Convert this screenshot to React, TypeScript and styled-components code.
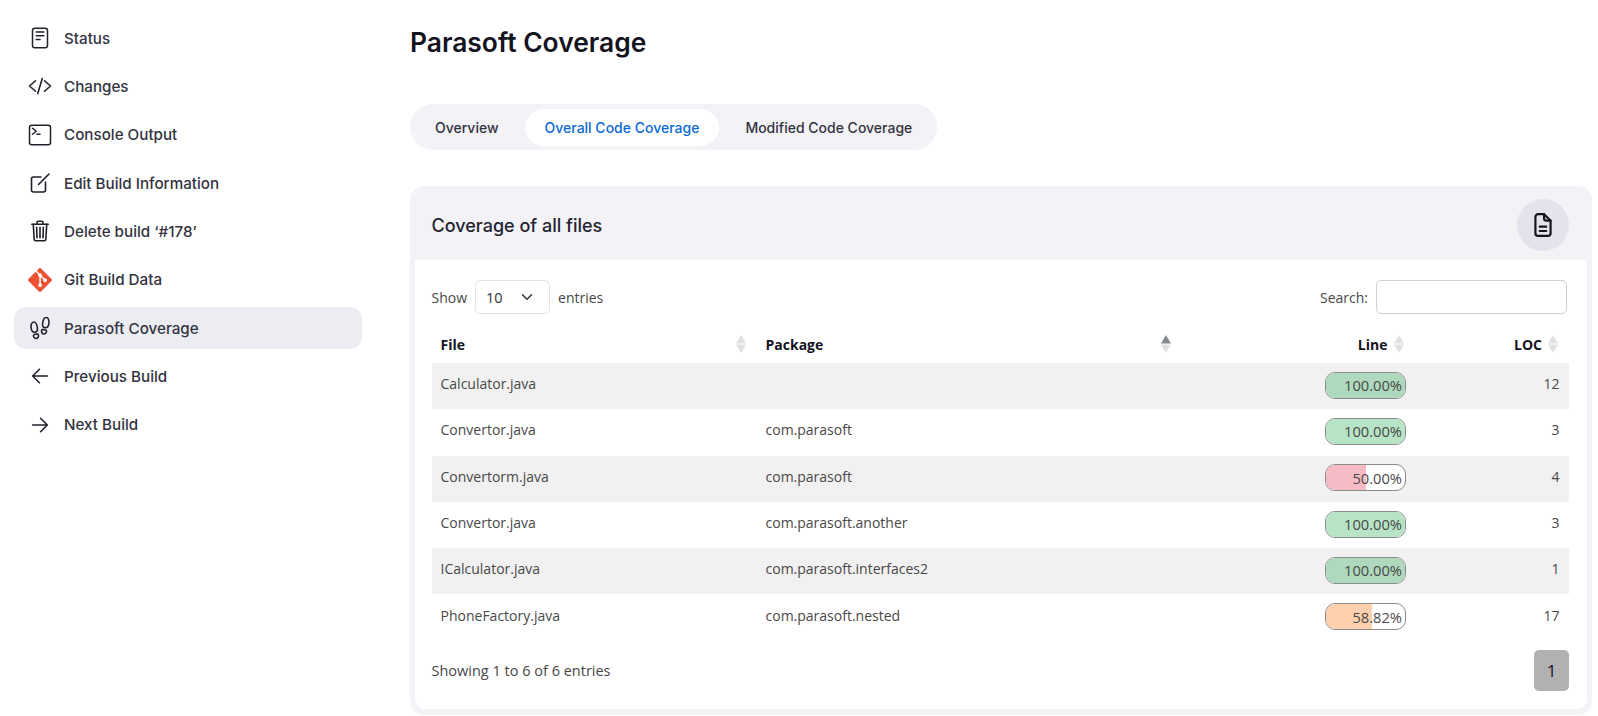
import React from 'react'
import styled, { createGlobalStyle } from 'styled-components'
import {
  IoReaderOutline,
  IoCodeSlashOutline,
  IoTerminalOutline,
  IoTrashOutline,
  IoFootstepsOutline,
  IoArrowBackOutline,
  IoArrowForwardOutline,
  IoChevronDownOutline,
} from 'react-icons/io5'
import { SiGit } from 'react-icons/si'

type Row = {
  file: string
  pkg: string
  pct: number
  loc: number
}

const rows: Row[] = [
  { file: 'Calculator.java', pkg: '', pct: 100, loc: 12 },
  { file: 'Convertor.java', pkg: 'com.parasoft', pct: 100, loc: 3 },
  { file: 'Convertorm.java', pkg: 'com.parasoft', pct: 50, loc: 4 },
  { file: 'Convertor.java', pkg: 'com.parasoft.another', pct: 100, loc: 3 },
  { file: 'ICalculator.java', pkg: 'com.parasoft.interfaces2', pct: 100, loc: 1 },
  { file: 'PhoneFactory.java', pkg: 'com.parasoft.nested', pct: 58.82, loc: 17 },
]

const GlobalStyle = createGlobalStyle`
  html, body {
    margin: 0;
    padding: 0;
    background: #fff;
  }
  * {
    box-sizing: border-box;
  }
`

const EditIcon = () => (
  <svg viewBox="0 0 24 24" width="24" height="24" fill="none" stroke="currentColor" strokeWidth="1.6" strokeLinecap="round" strokeLinejoin="round">
    <path d="M13 6H5.5A2 2 0 0 0 3.5 8v11a2 2 0 0 0 2 2h10a2 2 0 0 0 2-2v-8" />
    <path d="M10.5 13.5 21 3" />
  </svg>
)

const ReportIcon = () => (
  <svg viewBox="0 0 24 24" width="26" height="26" fill="none" stroke="currentColor" strokeWidth="2" strokeLinecap="round" strokeLinejoin="round">
    <path d="M13 2H7.5A2.5 2.5 0 0 0 5 4.5v15A2.5 2.5 0 0 0 7.5 22h9a2.5 2.5 0 0 0 2.5-2.5V8Z" />
    <path d="M13 2v4a2 2 0 0 0 2 2h4" />
    <path d="M9 13.5h6M9 17.5h6" />
  </svg>
)

const SortIcon = ({ active }: { active?: boolean }) => (
  <SortSvg viewBox="0 0 10 18">
    <path d="M5 0 10 8.5H0Z" fill={active ? '#868b8e' : '#dfe1e1'} />
    <path d="M5 18 10 9.5H0Z" fill="#dfe1e1" />
  </SortSvg>
)

const navItems = [
  { label: 'Status', icon: <IoReaderOutline /> },
  { label: 'Changes', icon: <IoCodeSlashOutline /> },
  { label: 'Console Output', icon: <IoTerminalOutline /> },
  { label: 'Edit Build Information', icon: <EditIcon /> },
  { label: 'Delete build ‘#178’', icon: <IoTrashOutline /> },
  { label: 'Git Build Data', icon: <SiGit color="#f05133" /> },
  { label: 'Parasoft Coverage', icon: <IoFootstepsOutline />, active: true },
  { label: 'Previous Build', icon: <IoArrowBackOutline /> },
  { label: 'Next Build', icon: <IoArrowForwardOutline /> },
]

export default function App() {
  return (
    <Page>
      <GlobalStyle />
      <Sidebar>
        {navItems.map((item) => (
          <NavItem key={item.label} $active={item.active}>
            <NavIcon>{item.icon}</NavIcon>
            {item.label}
          </NavItem>
        ))}
      </Sidebar>

      <Main>
        <Title>Parasoft Coverage</Title>

        <Tabs>
          <Tab>Overview</Tab>
          <Tab $active>Overall Code Coverage</Tab>
          <Tab>Modified Code Coverage</Tab>
        </Tabs>

        <Card>
          <CardHeader>
            <CardTitle>Coverage of all files</CardTitle>
            <RoundButton>
              <ReportIcon />
            </RoundButton>
          </CardHeader>

          <CardBody>
            <Controls>
              <ControlGroup>
                Show
                <SelectBox>
                  10
                  <IoChevronDownOutline />
                </SelectBox>
                entries
              </ControlGroup>
              <ControlGroup>
                Search:
                <SearchInput type="text" />
              </ControlGroup>
            </Controls>

            <Table>
              <colgroup>
                <col style={{ width: 325 }} />
                <col style={{ width: 425 }} />
                <col style={{ width: 233 }} />
                <col />
              </colgroup>
              <thead>
                <tr>
                  <Th>
                    File
                    <SortIcon />
                  </Th>
                  <Th>
                    Package
                    <SortIcon active />
                  </Th>
                  <Th $right>
                    Line
                    <SortIcon />
                  </Th>
                  <Th $right>
                    LOC
                    <SortIcon />
                  </Th>
                </tr>
              </thead>
              <tbody>
                {rows.map((row, i) => (
                  <Tr key={i}>
                    <Td>{row.file}</Td>
                    <Td>{row.pkg}</Td>
                    <BarCell>
                      <Bar>
                        <BarFill $pct={row.pct} style={{ width: `${row.pct}%` }} />
                        <BarText>{row.pct.toFixed(2)}%</BarText>
                      </Bar>
                    </BarCell>
                    <Td $right>{row.loc}</Td>
                  </Tr>
                ))}
              </tbody>
            </Table>

            <Footer>
              Showing 1 to 6 of 6 entries
              <PageButton>1</PageButton>
            </Footer>
          </CardBody>
        </Card>
      </Main>
    </Page>
  )
}

const bodyFont = `"Open Sans", "Noto Sans", sans-serif`

const Page = styled.div`
  display: grid;
  grid-template-columns: 348px 1fr;
  column-gap: 48px;
  height: 716px;
  padding: 0 6px 0 14px;
  overflow: hidden;
  font-family: Inter, sans-serif;
  color: #14141f;
`

const Sidebar = styled.nav`
  display: flex;
  flex-direction: column;
  gap: 6.35px;
  padding-top: 17px;
`

const NavItem = styled.div<{ $active?: boolean }>`
  display: flex;
  align-items: center;
  gap: 12px;
  height: 42px;
  padding-left: 14px;
  border-radius: 12px;
  font-size: 15.2px;
  font-weight: 500;
  color: #33333f;
  background: ${(p) => (p.$active ? '#ecedf3' : 'transparent')};
`

const NavIcon = styled.span`
  display: flex;
  align-items: center;
  justify-content: center;
  width: 24px;
  height: 24px;
  font-size: 24px;
  color: #20202c;

  svg[viewBox='0 0 512 512'] path {
    stroke-width: 34;
  }
`

const Main = styled.main`
  display: flex;
  flex-direction: column;
  min-width: 0;
`

const Title = styled.h1`
  margin: 24px 0 0;
  height: 36px;
  font-size: 26.4px;
  line-height: 36px;
  font-weight: 600;
  color: #14141f;
`

const Tabs = styled.div`
  display: flex;
  align-self: flex-start;
  align-items: center;
  gap: 6px;
  height: 46px;
  margin-top: 44px;
  padding: 0 5px;
  border-radius: 23px;
  background: #f2f2f7;
`

const Tab = styled.div<{ $active?: boolean }>`
  display: flex;
  align-items: center;
  height: 37px;
  padding: 0 20px;
  border-radius: 19px;
  font-size: 14px;
  font-weight: 500;
  color: ${(p) => (p.$active ? '#0b69d4' : '#33333f')};
  background: ${(p) => (p.$active ? '#fff' : 'transparent')};
`

const Card = styled.section`
  display: flex;
  flex-direction: column;
  width: 1182px;
  height: 529px;
  margin-top: 36px;
  padding: 0 5px 6px;
  border-radius: 14px;
  background: #f2f2f7;
`

const CardHeader = styled.header`
  display: flex;
  align-items: center;
  justify-content: space-between;
  height: 74px;
  padding: 4px 18px 0 16.5px;
`

const CardTitle = styled.h2`
  margin: 0;
  font-size: 18px;
  font-weight: 500;
  color: #24242f;
`

const RoundButton = styled.div`
  display: flex;
  align-items: center;
  justify-content: center;
  width: 52px;
  height: 52px;
  border-radius: 50%;
  color: #14141f;
  background: #e3e3ee;
`

const CardBody = styled.div`
  flex: 1;
  display: flex;
  flex-direction: column;
  padding: 20px 18px 0 16.5px;
  border-radius: 0 0 10px 10px;
  background: #fff;
  font-family: ${bodyFont};
  font-size: 14px;
  color: #484848;
`

const Controls = styled.div`
  display: flex;
  align-items: center;
  justify-content: space-between;
  height: 34px;
  padding-right: 2px;
`

const ControlGroup = styled.div`
  display: flex;
  align-items: center;
  gap: 8px;
`

const SelectBox = styled.div`
  display: flex;
  align-items: center;
  justify-content: space-between;
  width: 75px;
  height: 34px;
  padding: 0 14px 0 10px;
  border: 1px solid #e3e3e8;
  border-radius: 5px;
  font-size: 14.5px;
  color: #333;

  svg {
    width: 16px;
    height: 16px;
  }
`

const SearchInput = styled.input`
  width: 191px;
  height: 34px;
  border: 1px solid #cbd2da;
  border-radius: 5px;
  outline: none;
  background: #fff;
`

const Table = styled.table`
  width: 100%;
  margin-top: 15px;
  border-collapse: collapse;
  table-layout: fixed;
`

const Th = styled.th<{ $right?: boolean }>`
  position: relative;
  height: 34px;
  padding: 0 ${(p) => (p.$right ? '27px' : '9px')} 4px 9px;
  text-align: ${(p) => (p.$right ? 'right' : 'left')};
  font-size: 14px;
  font-weight: 700;
  color: #14141f;
`

const SortSvg = styled.svg`
  position: absolute;
  right: 11px;
  top: 6px;
  width: 10px;
  height: 18px;
`

const Tr = styled.tr`
  height: 46.3px;

  &:nth-child(odd) {
    background: #f1f1f1;
  }
`

const Td = styled.td<{ $right?: boolean }>`
  padding: 0 9.5px 5px 9px;
  text-align: ${(p) => (p.$right ? 'right' : 'left')};
  vertical-align: middle;
`

const BarCell = styled.td`
  padding: 0 9.5px 2px;
  text-align: right;
  vertical-align: middle;
`

const Bar = styled.div`
  position: relative;
  display: inline-flex;
  justify-content: flex-end;
  align-items: center;
  width: 81px;
  height: 27px;
  padding-right: 3px;
  margin-right: -1px;
  overflow: hidden;
  vertical-align: middle;
  border: 1px solid #8c8c8c;
  border-radius: 10px;
  background: #fff;
`

const BarFill = styled.div<{ $pct: number }>`
  position: absolute;
  left: 0;
  top: 0;
  bottom: 0;
  background: ${(p) => (p.$pct === 100 ? '#b8e4c6' : p.$pct > 55 ? '#fed0ae' : '#f6bcc6')};

  tr:nth-child(odd) & {
    filter: ${(p) => (p.$pct === 100 ? 'brightness(0.95)' : 'none')};
  }
`

const BarText = styled.span`
  position: relative;
  font-size: 14.7px;
  color: #484848;
`

const Footer = styled.div`
  display: flex;
  align-items: center;
  justify-content: space-between;
  margin-top: 9.5px;
  font-size: 14.5px;
`

const PageButton = styled.div`
  display: flex;
  align-items: center;
  justify-content: center;
  width: 35px;
  height: 41px;
  border-radius: 5px;
  background: #b1b1b1;
  font-size: 17px;
  color: #14141f;
`
